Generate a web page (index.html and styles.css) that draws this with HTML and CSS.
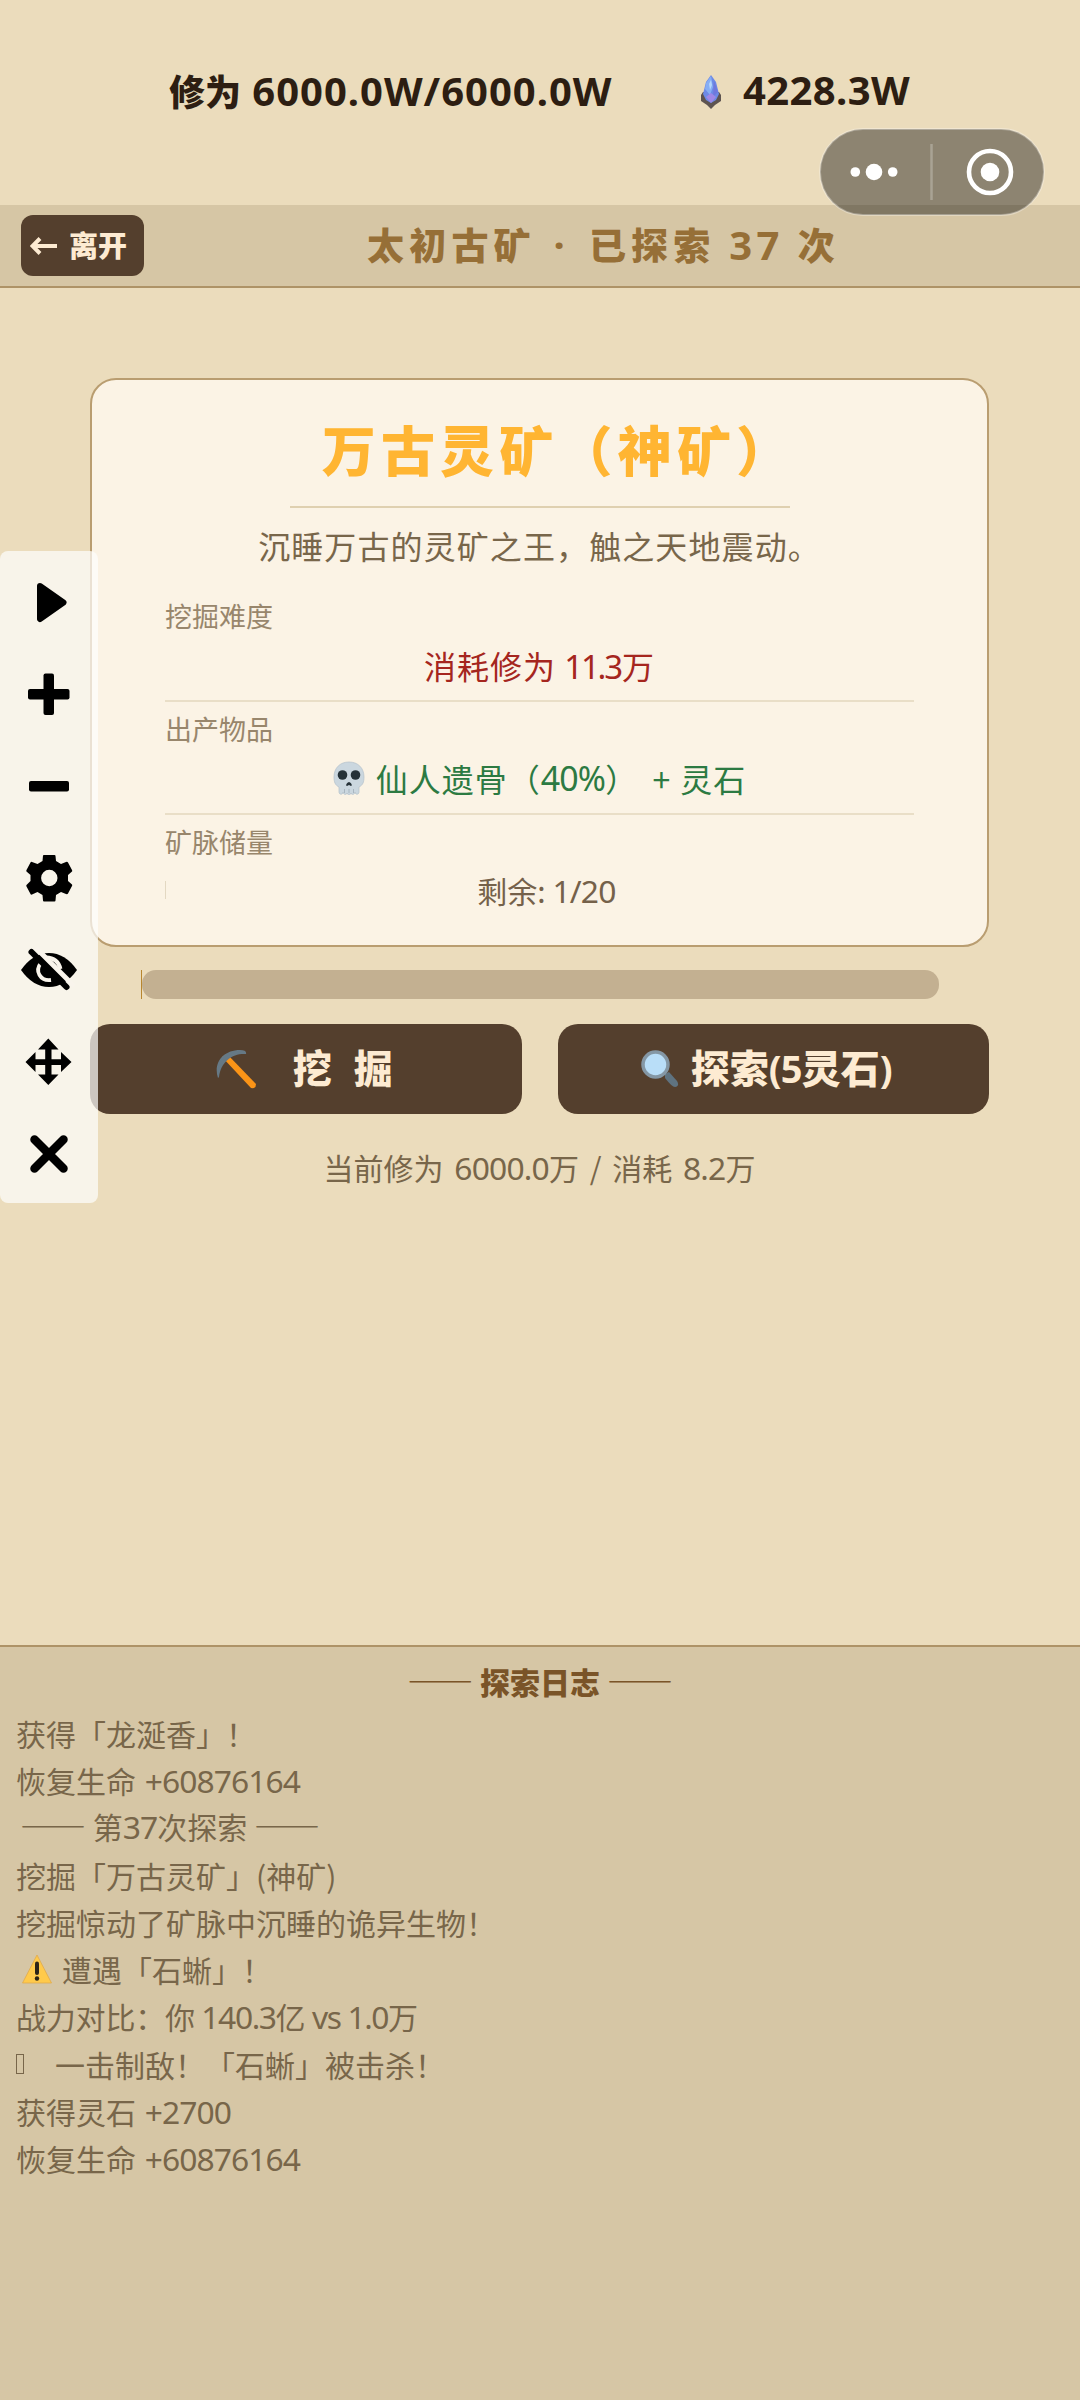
FILE: index.html
```
<!DOCTYPE html>
<html lang="zh-CN">
<head>
<meta charset="utf-8">
<title>太初古矿</title>
<link rel="stylesheet" href="styles.css">
</head>
<body>
<div class="screen">
  <header class="stats">
    <div class="stat">修为 <span class="num">6000.0W/6000.0W</span></div>
    <div class="stat stones">
      <svg class="crystal" viewBox="0 0 22 34"><path d="M1 20L3 17H19L21 20L21 26L15 30L11 34L7 30L1 26Z" fill="#5e5450"/><path d="M11 0L16 7L19 19L16 25L11 28L6 25L3 19L6 7Z" fill="#6d8ae6"/><path d="M11 1L13 12L10 20L5 14L6 8Z" fill="#86aef4"/><path d="M14 6L18 17L13 22Z" fill="#6f78dd"/><path d="M6 22L11 18L16 22L11 28Z" fill="#a088e6"/><path d="M9 9L11 5L12 10L10 15Z" fill="#b4d6fb"/></svg>
      <span class="num">4228.3W</span>
    </div>
  </header>

  <nav class="titlebar">
    <button class="leave"><svg viewBox="0 0 28 20"><path d="M27 10H3M10 2.500L2.500 10L10 17.500" fill="none" stroke="#fdebd2" stroke-width="4"/></svg><span>离开</span></button>
    <h1>太初古矿 <span class="num dot">·</span> 已探索 <span class="num">37</span> 次</h1>
  </nav>

  <main>
    <section class="card">
      <h2>万古灵矿（神矿<span class="trim">）</span></h2>
      <p class="desc">沉睡万古的灵矿之王，触之天地震动。</p>
      <dl>
        <div class="row"><dt>挖掘难度</dt><dd class="cost">消耗修为 <span class="num">11.3</span>万</dd></div>
        <div class="row"><dt>出产物品</dt><dd class="loot">
          <svg class="skull" viewBox="0 0 32 34"><path d="M16 1C7 1 1 7 1 16c0 5 1 8 5 10v5c0 3 4 3 4 0c0 3 4 3 4 1c0 2 4 2 4 0c0 2 4 2 4-1c0 3 4 3 4 0v-5c4-2 5-5 5-10C31 7 25 1 16 1z" fill="#cbd7df" stroke="#b3c0ca" stroke-width=".7"/><circle cx="9.500" cy="14" r="4.800" fill="#263238"/><circle cx="22.500" cy="14" r="4.800" fill="#263238"/><path d="M16 21c-3 1-3.500 4-2 4l2-1l2 1c1.500 0 1-3-2-4z" fill="#263238"/><path d="M11.500 28v4M16 28v4M20.500 28v4" stroke="#9fadb7" stroke-width=".8"/></svg>仙人遗骨（<span class="num">40%</span>） <span class="plus">+</span> 灵石</dd></div>
        <div class="row"><dt>矿脉储量</dt><dd class="left">剩余: <span class="num">1/20</span></dd></div>
      </dl>
    </section>

    <div class="progress"><div class="track"></div></div>

    <div class="actions">
      <button class="dig"><svg viewBox="0 0 42 40"><path d="M7 8L12 5L41 35Q41 40 36 39Z" fill="#fb9417"/><path d="M3 29C-2 14 8 1 25 1Q32 1 31 5C18 4 6 12 4 28Z" fill="#667985"/></svg><span>挖掘</span></button>
      <button class="search"><svg viewBox="0 0 38 38"><path d="M24 24L28 22L36 31Q39 36 34 37Q31 37 24 28Z" fill="#5f7380"/><circle cx="14.500" cy="14.500" r="12.500" fill="#b9def8" stroke="#8497a5" stroke-width="3.500"/></svg><span>探索<span class="num">(5</span>灵石<span class="num">)</span></span></button>
    </div>
    <p class="hint">当前修为 <span class="num">6000.0</span>万 / 消耗 <span class="num">8.2</span>万</p>
  </main>

  <section class="log">
    <h3><span class="dash">——</span> 探索日志 <span class="dash">——</span></h3>
    <ul>
      <li>获得「龙涎香」！</li>
      <li>恢复生命 <span class="num">+60876164</span></li>
      <li class="round"><span class="dash">——</span> 第<span class="num">37</span>次探索 <span class="dash">——</span></li>
      <li>挖掘「万古灵矿」(神矿)</li>
      <li>挖掘惊动了矿脉中沉睡的诡异生物！</li>
      <li class="alert"><svg viewBox="0 0 30 30"><path d="M15 1L29.500 29H.5Z" fill="#ffca4b" stroke="#e0a94c" stroke-width=".8" stroke-linejoin="round"/><path d="M15 9.500V19" stroke="#2b2418" stroke-width="4" stroke-linecap="round"/><circle cx="15" cy="24.500" r="2.200" fill="#2b2418"/></svg>遭遇「石蜥」！</li>
      <li class="power">战力对比：你 <span class="num">140.3</span>亿 <span class="num">vs 1.0</span>万</li>
      <li class="kill"><i class="tofu"></i>一击制敌！「石蜥」被击杀！</li>
      <li>获得灵石 <span class="num">+2700</span></li>
      <li>恢复生命 <span class="num">+60876164</span></li>
    </ul>
  </section>

  <svg class="capsule" viewBox="0 0 226 88"><rect x="1" y="1" width="224" height="86" rx="43" fill="#000" fill-opacity=".4" stroke="#fff" stroke-opacity=".3" stroke-width="2"/><g fill="#fff"><circle cx="36.300" cy="44" r="4.800"/><circle cx="55" cy="44" r="8.300"/><circle cx="73.700" cy="44" r="4.800"/><circle cx="171" cy="44" r="9.300"/></g><path d="M112.500 16V72" stroke="#fff" stroke-opacity=".25" stroke-width="2.500"/><circle cx="171" cy="44" r="21" fill="none" stroke="#fff" stroke-width="4.600"/></svg>

  <aside class="tools">
    <svg viewBox="0 0 98 92"><path d="M40 34L63.500 50.500L40 67Z" stroke="#000" stroke-width="6" stroke-linejoin="round"/></svg>
    <svg viewBox="0 0 98 92"><rect x="28" y="45" width="41.500" height="10.500" rx="2"/><rect x="43.500" y="29.500" width="10.500" height="41.500" rx="2"/></svg>
    <svg viewBox="0 0 98 92"><rect x="29" y="45" width="40" height="10.500" rx="2"/></svg>
    <svg viewBox="0 0 98 92"><path fill-rule="evenodd" d="M43 27.500Q43 27 44 27H54.500Q55.500 27 55.500 28L56 33L61 36L66 34Q67.500 33.500 68 34.500L72 42Q72.500 43 72 43.500L68 47V53L72 56.500Q72.500 57 72 58L68 65.500Q67.500 66.500 66 66L61 64L56 67L55.500 72.500Q55.500 73.500 54.500 73.500H44Q43 73.500 43 72.500L42.500 67L37.500 64L32 66.500Q31 67 30.500 66L26.500 58.500Q26 57.500 26.500 57L30.500 53V47L26.500 43.500Q26 43 26.500 42L30.500 34.500Q31 33.500 32 34L37.500 36L42.500 33ZM49.300 41.800A8.200 8.200 0 1 0 49.300 58.200A8.200 8.200 0 1 0 49.300 41.800Z"/></svg>
    <svg viewBox="0 0 98 92"><path d="M21 50Q33 33 49 33Q65 33 77 50Q65 67 49 67Q33 67 21 50Z"/><path d="M41 43Q36 49 39.500 55Q43 61 51 60M46 37.500Q58 38 60.500 49" fill="none" stroke="#f9f4ec" stroke-width="3.800"/><path d="M36 28L74 66" stroke="#f9f4ec" stroke-width="5"/><path d="M31.500 32L66.500 67" stroke="#000" stroke-width="6" stroke-linecap="round"/></svg>
    <svg viewBox="0 0 98 92"><path d="M48.300 26.500L58.500 37.500H51.500V47.300H61V40L71.500 50L61 60V53H51.500V62.500H58.500L48.300 73L38 62.500H45.200V53H35.500V60L25.500 50L35.500 40V47.300H45.200V37.500H38Z"/></svg>
    <svg viewBox="0 0 98 92"><path d="M34.500 35.500L63.500 64.500M63.500 35.500L34.500 64.500" stroke="#000" stroke-width="8.500" stroke-linecap="round"/></svg>
  </aside>
</div>
</body>
</html>
```
FILE: styles.css
```
* { box-sizing: border-box; margin: 0; padding: 0; }
body { background: #ebdcbc; }
button { border: 0; font: inherit; }
ul { list-style: none; }

.screen {
  position: relative;
  width: 1080px;
  height: 2400px;
  display: flex;
  flex-direction: column;
  overflow: hidden;
  background: #ebdcbc;
  color: #78664a;
  font-family: "Noto Sans CJK SC", sans-serif;
  white-space: nowrap;
}
.num { font-family: "Noto Sans", sans-serif; font-size: 1.06em; line-height: 1; letter-spacing: -.8px; }

.stats {
  height: 205px;
  padding: 60px 0 0 169px;
  display: flex;
  align-items: flex-start;
  font-size: 36px;
  font-weight: 900;
  line-height: 60px;
  color: #2d1e12;
}
.stat { width: 531px; }
.stat .num { margin-left: 3px; font-size: 40px; font-weight: 700; letter-spacing: 1px; }
.stones { width: auto; display: flex; align-items: center; gap: 18px; height: 60px; }
.stones .num { letter-spacing: .4px; }
.crystal { width: 22px; height: 34px; margin-top: 3px; }

.titlebar {
  height: 83px;
  padding: 0 21px;
  display: flex;
  align-items: center;
  background: #d6c6a5;
  border-bottom: 2px solid #ae9367;
  color: #966f37;
}
.leave {
  width: 123px;
  height: 61px;
  padding-left: 9px;
  display: flex;
  align-items: center;
  gap: 11px;
  border-radius: 12px;
  background: #543f2d;
  color: #fdebd2;
  font-size: 29px;
  font-weight: 900;
}
.leave span { margin-top: -3px; }
.leave svg { width: 28px; height: 20px; }
.titlebar h1 { margin: -3px 0 0 223px; font-size: 37px; font-weight: 900; letter-spacing: 5.200px; }
.titlebar .num { font-size: 40px; font-weight: 700; letter-spacing: 4.500px; }
.titlebar .dot { margin: 0 6px 0 4px; }

main { height: 1357px; padding: 90px 91px 0 90px; }
.card {
  height: 569px;
  padding: 32px 73px 0;
  border: 2px solid #b99d70;
  border-radius: 26px;
  background: #fbf3e5;
  text-align: center;
}
.card h2 { width: 500px; height: 96px; margin: 0 auto; padding-left: 11px; border-bottom: 2px solid #dfd0b0; font-size: 54px; font-weight: 900; line-height: 74px; letter-spacing: 5.200px; color: #ffb532; }
.trim { margin-right: -.5em; }
.desc { height: 81px; font-size: 32px; letter-spacing: 1.100px; line-height: 75px; }
.row { height: 113px; border-bottom: 2px solid #e9dec7; }
.row:last-child { border: 0; }
dt { height: 46px; padding-top: 7px; text-align: left; font-size: 27px; line-height: 40px; color: #98866c; }
dd { display: flex; justify-content: center; align-items: center; height: 60px; font-size: 32px; letter-spacing: 1px; white-space: pre; }
dd .num { padding-top: 2px; }
.cost { color: #a5261e; }
.cost .num { font-size: 33px; letter-spacing: -2.200px; padding-right: 1px; }
.loot { color: #2c7a42; }
.plus { margin: 0 1px 0 6px; }
.skull { width: 32px; height: 34px; margin-right: 11px; }
.left { height: 18px; margin-top: 20px; padding-left: 13px; border-left: 1px solid #e3d8c2; font-size: 30px; letter-spacing: 0; color: #75614a; }

.progress { margin: 23px 50px 0 51px; border-left: 1px solid #b8862f; }
.track { height: 29px; border-radius: 14px; background: #c3b091; }
.actions { display: grid; grid-template-columns: 1fr 1fr; gap: 36px; margin-top: 25px; }
.actions button {
  height: 90px;
  display: flex;
  align-items: center;
  justify-content: center;
  border-radius: 20px;
  background: #543f2d;
  color: #fdebd2;
  font-size: 39px;
  font-weight: 900;
}
.actions button > span { margin-top: -6px; }
.actions .dig { padding-left: 18px; letter-spacing: 22px; }
.dig svg { width: 42px; height: 40px; margin-right: 36px; }
.actions .search { padding-right: 14px; }
.search svg { width: 38px; height: 38px; margin-right: 12px; }
.search .num { font-size: 38px; font-weight: 700; }
.hint { margin-top: 31px; text-align: center; font-size: 30px; line-height: 44px; word-spacing: 4px; }

.log { flex: 1; padding: 12px 16px; border-top: 2px solid #ae9367; background: #d6c6a5; }
.log h3 { height: 50px; text-align: center; font-size: 30px; font-weight: 900; line-height: 44px; color: #7a5428; }
.dash { font-size: 33px; line-height: 1; font-weight: 400; }
.log li { height: 47.300px; display: flex; align-items: center; font-size: 30px; white-space: pre; word-spacing: 2px; }
.log .num { letter-spacing: -.95px; padding-top: 1px; }
.log .round { display: block; padding-left: 4px; line-height: 45px; word-spacing: 0; }
.log .power { letter-spacing: -.2px; word-spacing: 0; }
.log .power .num { letter-spacing: -1.400px; }
.alert svg { width: 30px; height: 30px; margin: 0 10px 0 6px; }
.tofu { width: 8px; height: 20px; margin-right: 31px; border: 1px solid #78664a; }

.capsule { position: absolute; left: 819px; top: 128px; width: 226px; height: 88px; }
.tools {
  position: absolute;
  left: 0;
  top: 551px;
  width: 98px;
  height: 652px;
  padding-top: 1px;
  display: flex;
  flex-direction: column;
  border-radius: 8px;
  background: rgba(254, 253, 252, .71);
}
.tools svg { width: 98px; height: 92px; }
```
